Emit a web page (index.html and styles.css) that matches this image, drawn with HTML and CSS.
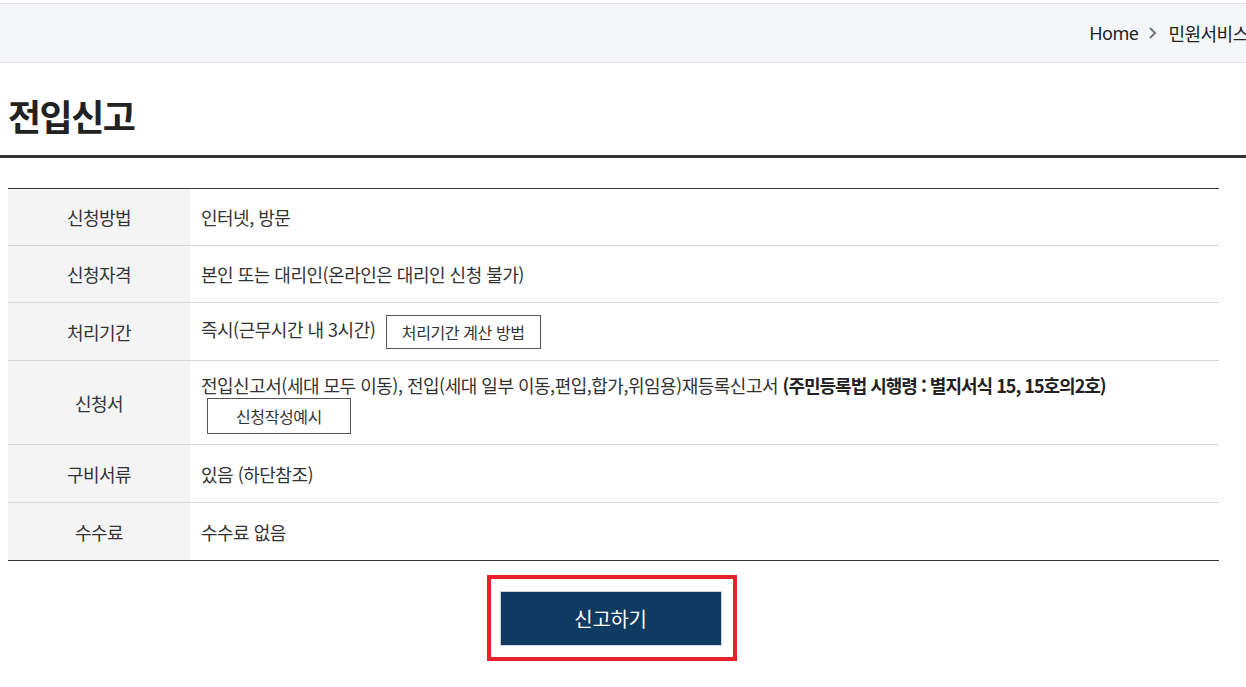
FILE: index.html
```html
<!DOCTYPE html>
<html lang="ko">
<head>
  <meta charset="UTF-8" />
  <meta name="viewport" content="width=device-width, initial-scale=1.0"/>
  <title>전입신고</title>
  <link rel="stylesheet" href="styles.css">
</head>
<body>
  <!-- 상단 위치 표시 -->
  <div class="location-bar">
    <ul class="location">
      <li>Home</li>
      <li class="arrow">
        <svg width="9" height="14" viewBox="0 0 9 14"><path d="M2 2 L7 7 L2 12" fill="none" stroke="#777" stroke-width="2"/></svg>
      </li>
      <li>민원서비스</li>
      <li class="arrow">
        <svg width="9" height="14" viewBox="0 0 9 14"><path d="M2 2 L7 7 L2 12" fill="none" stroke="#777" stroke-width="2"/></svg>
      </li>
      <li>전입신고</li>
    </ul>
  </div>

  <div class="title-area">
    <h2>전입신고</h2>
  </div>

  <div class="content">
    <table class="info-table">
      <tr>
        <th>신청방법</th>
        <td>인터넷, 방문</td>
      </tr>
      <tr>
        <th>신청자격</th>
        <td>본인 또는 대리인(온라인은 대리인 신청 불가)</td>
      </tr>
      <tr>
        <th>처리기간</th>
        <td>즉시(근무시간 내 3시간) <a href="#" class="btn-line">처리기간 계산 방법</a></td>
      </tr>
      <tr class="tall">
        <th>신청서</th>
        <td>전입신고서(세대 모두 이동), 전입(세대 일부 이동,편입,합가,위임용)재등록신고서 <b>(주민등록법 시행령 : 별지서식 15, 15호의2호)</b> <a href="#" class="btn-line wide">신청작성예시</a></td>
      </tr>
      <tr>
        <th>구비서류</th>
        <td>있음 (하단참조)</td>
      </tr>
      <tr>
        <th>수수료</th>
        <td>수수료 없음</td>
      </tr>
    </table>

    <div class="btn-area">
      <div class="highlight">
        <a href="#" class="btn-submit">신고하기</a>
      </div>
    </div>

    <h3 class="sub-title">구비서류</h3>
  </div>
</body>
</html>
```

FILE: styles.css
```css
html, body {
  overflow-x: hidden;
}
body {
  margin: 0;
  font-family: "Noto Sans CJK KR", "Noto Sans", sans-serif;
  color: #333;
  background: #fff;
}
a {
  color: inherit;
  text-decoration: none;
}
.location-bar {
  margin-top: 3px;
  height: 58px;
  background: #f5f6fa;
  border-top: 1px solid #e2e2e6;
  border-bottom: 1px solid #e2e2e6;
  overflow: hidden;
}
.location {
  list-style: none;
  margin: 0 -97px 0 0;
  padding: 0;
  height: 100%;
  display: flex;
  align-items: center;
  justify-content: flex-end;
  white-space: nowrap;
  font-family: "Noto Sans", "Noto Sans CJK KR", sans-serif;
  font-size: 18px;
  color: #222;
  letter-spacing: -0.5px;
}
.location li {
  display: flex;
  align-items: center;
}
.location .arrow {
  margin: 0 11px 0 10px;
}
.title-area {
  padding: 29px 8px 17px;
  border-bottom: 3px solid #333;
}
.title-area h2 {
  margin: 0;
  font-size: 36px;
  line-height: 46px;
  font-weight: bold;
  letter-spacing: -1.5px;
  color: #222;
}
.content {
  margin: 30px 27px 0 8px;
}
.info-table {
  width: 100%;
  border-collapse: collapse;
  border-top: 1px solid #333;
  border-bottom: 1px solid #333;
  font-size: 18px;
  letter-spacing: -0.5px;
}
.info-table th,
.info-table td {
  height: 57px;
  padding: 0 11px;
  border-top: 1px solid #d5d5d5;
  text-align: left;
  vertical-align: middle;
}
.info-table tr:nth-child(-n+2) th,
.info-table tr:nth-child(-n+2) td {
  height: 56px;
}
.info-table th {
  width: 160px;
  background: #f4f4f4;
  font-weight: normal;
  text-align: center;
}
.info-table tr:first-child th,
.info-table tr:first-child td {
  border-top: none;
}
.info-table tr.tall td,
.info-table tr.tall th {
  height: 83px;
  line-height: 26px;
}
.info-table b {
  color: #222;
  letter-spacing: -1px;
}
.btn-line {
  display: inline-block;
  margin-left: 6px;
  padding: 0 15px;
  height: 32px;
  line-height: 32px;
  border: 1px solid #555;
  font-size: 16px;
  letter-spacing: -0.4px;
  vertical-align: middle;
}
.btn-line.wide {
  padding: 0 28px;
  height: 34px;
  line-height: 34px;
}
.btn-area {
  display: flex;
  justify-content: center;
  margin-top: 14px;
}
.highlight {
  margin-right: 4px;
  border: 4px solid #e8202a;
  padding: 12px 11px 11px 9px;
}
.btn-submit {
  display: block;
  width: 220px;
  height: 53px;
  line-height: 53px;
  text-align: center;
  background: #0f3a62;
  border: 1px solid #d0d4d8;
  color: #fff;
  font-size: 20px;
  letter-spacing: -0.3px;
}
.sub-title {
  margin: 25px 0 0 18px;
  font-size: 20px;
  color: #222;
}
```
